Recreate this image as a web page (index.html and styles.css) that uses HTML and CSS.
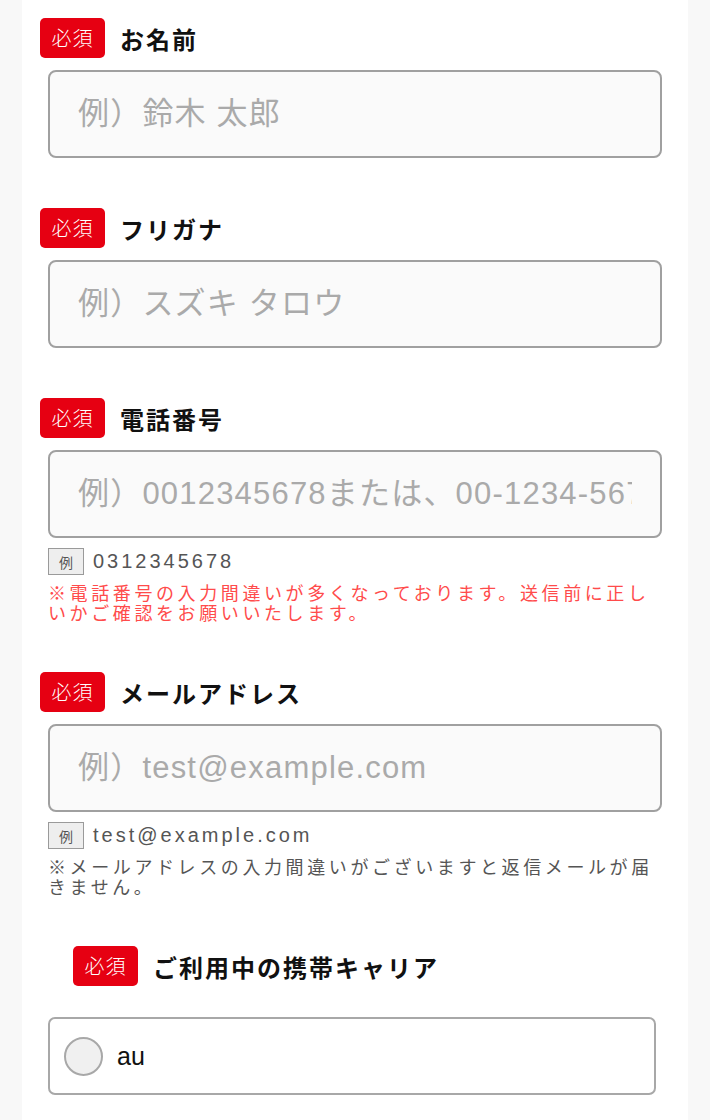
FILE: index.html
```html
<!DOCTYPE html>
<html lang="ja">
<head>
<meta charset="utf-8">
<title>お問い合わせフォーム</title>
<link rel="stylesheet" href="styles.css">
</head>
<body>
<main class="form">
  <section class="field">
    <div class="field-head"><span class="badge">必須</span><span class="field-label">お名前</span></div>
    <input class="text-input" type="text" placeholder="例）鈴木 太郎">
  </section>

  <section class="field">
    <div class="field-head"><span class="badge">必須</span><span class="field-label">フリガナ</span></div>
    <input class="text-input" type="text" placeholder="例）スズキ タロウ">
  </section>

  <section class="field">
    <div class="field-head"><span class="badge">必須</span><span class="field-label">電話番号</span></div>
    <input class="text-input" type="tel" placeholder="例）0012345678または、00-1234-5678">
    <p class="example"><span class="example-tag">例</span><span class="example-value">0312345678</span></p>
    <p class="note note-alert">※電話番号の入力間違いが多くなっております。送信前に正しいかご確認をお願いいたします。</p>
  </section>

  <section class="field">
    <div class="field-head"><span class="badge">必須</span><span class="field-label">メールアドレス</span></div>
    <input class="text-input" type="email" placeholder="例）test@example.com">
    <p class="example"><span class="example-tag">例</span><span class="example-value">test@example.com</span></p>
    <p class="note">※メールアドレスの入力間違いがございますと返信メールが届きません。</p>
  </section>

  <section class="field field-carrier">
    <div class="field-head field-head-indent"><span class="badge">必須</span><span class="field-label">ご利用中の携帯キャリア</span></div>
    <label class="radio-option"><input class="radio" type="radio" name="carrier"><span class="radio-text">au</span></label>
  </section>
</main>
</body>
</html>
```

FILE: styles.css
```css
html, body {
  margin: 0;
  padding: 0;
}

body {
  background: #f8f8f8;
  font-family: "Liberation Sans", "Noto Sans CJK JP", sans-serif;
  color: #111;
}

.form {
  box-sizing: border-box;
  width: 666px;
  min-height: 1120px;
  margin-left: 22px;
  padding: 18px 26px 0;
  background: #fff;
}

.field {
  margin-bottom: 50px;
}

.field-head {
  display: flex;
  align-items: center;
  gap: 15px;
  margin: 0 0 12px -8px;
}

.badge {
  display: inline-flex;
  align-items: center;
  justify-content: center;
  width: 65px;
  height: 40px;
  border-radius: 5px;
  background: #e60012;
  color: #fff;
  font-family: "Noto Sans CJK JP", sans-serif;
  font-size: 20px;
  font-weight: 300;
  letter-spacing: 1px;
  line-height: 1;
}

.field-label {
  font-family: "Noto Sans CJK JP", sans-serif;
  font-size: 24px;
  font-weight: 700;
  letter-spacing: 2px;
  color: #111;
}

.text-input {
  display: block;
  box-sizing: border-box;
  width: 100%;
  height: 88px;
  margin: 0;
  padding: 0 28px;
  border: 2px solid #a0a0a0;
  border-radius: 8px;
  background: #fafafa;
  font-family: "Liberation Sans", "Noto Sans CJK JP", sans-serif;
  font-size: 31px;
  letter-spacing: 1.2px;
  color: #333;
  outline: none;
}

.text-input::placeholder {
  color: #aaaaaa;
  opacity: 1;
}

.example {
  display: flex;
  align-items: center;
  gap: 9px;
  margin: 10px 0 0;
}

.example-tag {
  display: inline-flex;
  align-items: center;
  justify-content: center;
  box-sizing: border-box;
  width: 36px;
  height: 27px;
  border: 1.5px solid #9a9a9a;
  background: #eeeeee;
  color: #555;
  font-family: "Noto Sans CJK JP", sans-serif;
  font-size: 14px;
}

.example-value {
  font-family: "Liberation Sans", "Noto Sans CJK JP", sans-serif;
  font-size: 20px;
  letter-spacing: 3px;
  color: #555;
}

.note {
  margin: 7px 0 0;
  font-family: "Noto Sans CJK JP", sans-serif;
  font-size: 18px;
  line-height: 20px;
  letter-spacing: 3.6px;
  color: #555;
}

.note-alert {
  color: #ff4b4b;
}

.field-head-indent {
  margin: 0 0 31px 25px;
}

.radio-option {
  display: flex;
  align-items: center;
  gap: 14px;
  box-sizing: border-box;
  height: 78px;
  margin-right: 6px;
  padding-left: 14px;
  border: 2px solid #a8a8a8;
  border-radius: 7px;
  background: #fff;
}

.radio {
  appearance: none;
  -webkit-appearance: none;
  box-sizing: border-box;
  width: 39px;
  height: 39px;
  margin: 0;
  border: 2px solid #a8a8a8;
  border-radius: 50%;
  background: #f0f0f0;
}

.radio-text {
  font-family: "Liberation Sans", sans-serif;
  font-size: 25px;
  color: #111;
}
```
